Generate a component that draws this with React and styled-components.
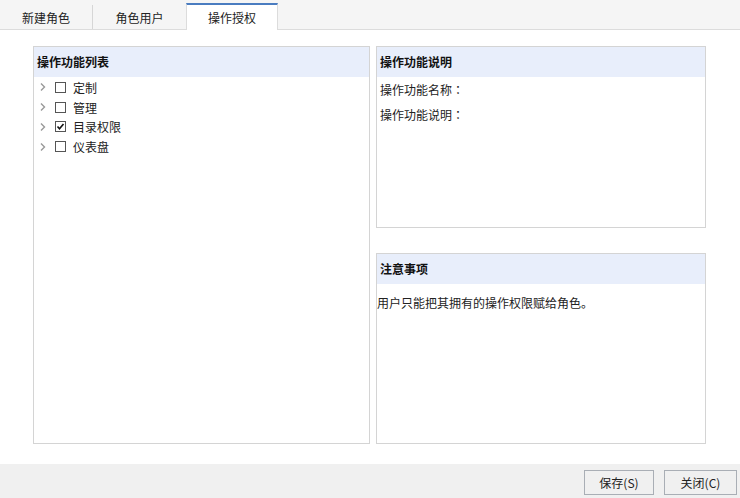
import React from "react";
import styled, { createGlobalStyle } from "styled-components";

const Global = createGlobalStyle`
  html, body { margin: 0; padding: 0; background: #fff; }
  body {
    font-family: "Noto Sans CJK SC", "Microsoft YaHei", "Noto Sans", sans-serif;
    font-size: 12px;
    color: #222;
  }
`;

const Page = styled.div`
  width: 740px;
  height: 498px;
  display: flex;
  flex-direction: column;
  overflow: hidden;
`;

const TabBar = styled.div`
  height: 29px;
  background: #f5f5f5;
  border-bottom: 1px solid #dcdcdc;
  display: flex;
  align-items: flex-end;
`;

const Tab = styled.div`
  width: ${(p) => p.$w}px;
  height: ${(p) => (p.$active ? 27 : 24)}px;
  box-sizing: border-box;
  display: flex;
  align-items: center;
  justify-content: center;
  font-size: 12px;
  color: #222;
  margin-bottom: ${(p) => (p.$active ? -1 : 0)}px;
  background: ${(p) => (p.$active ? "#fff" : "transparent")};
  border-top: ${(p) => (p.$active ? "2px solid #4a7cc0" : "none")};
  border-left: ${(p) => (p.$active ? "1px solid #dcdcdc" : "none")};
  border-right: ${(p) => (p.$active ? "1px solid #dcdcdc" : p.$sep ? "1px solid #d6d6d6" : "none")};
  padding-top: ${(p) => (p.$active ? 0 : 2)}px;
`;

const Body = styled.div`
  display: flex;
  gap: 6px;
  padding: 16px 0 0 33px;
  height: 418px;
  box-sizing: border-box;
`;

const Panel = styled.div`
  width: ${(p) => p.$w}px;
  height: ${(p) => p.$h}px;
  box-sizing: border-box;
  border: 1px solid #d4d4d4;
  background: #fff;
`;

const Column = styled.div`
  display: flex;
  flex-direction: column;
  gap: 25px;
`;

const PanelHeader = styled.div`
  height: 30px;
  background: #e8eefb;
  display: flex;
  align-items: center;
  padding-left: 3px;
  font-weight: bold;
  font-size: 12px;
  color: #111;
`;

const Tree = styled.div`
  padding-top: 1px;
  display: flex;
  flex-direction: column;
`;

const TreeRow = styled.div`
  height: 19.7px;
  display: flex;
  align-items: center;
  padding-left: 5px;
`;

const Arrow = styled.svg`
  width: 8px;
  height: 10px;
  margin-right: 8px;
`;

const Box = styled.div`
  width: 11px;
  height: 11px;
  box-sizing: border-box;
  border: 1px solid #555;
  background: #fff;
  margin-right: 7px;
  display: flex;
  align-items: center;
  justify-content: center;
`;

const Label = styled.span`
  font-size: 12px;
  color: #222;
`;

const InfoLine = styled.div`
  height: 25px;
  display: flex;
  align-items: center;
  padding-left: 3px;
  color: #222;
`;

const Colon = styled.span`
  font-family: "Noto Sans CJK TC", "Noto Sans CJK SC", sans-serif;
`;

const NoteText = styled.div`
  padding-top: 10px;
  color: #222;
`;

const Spacer = styled.div`
  height: 21px;
`;

const Footer = styled.div`
  height: 34px;
  background: #f0f0f0;
  display: flex;
  justify-content: flex-end;
  align-items: flex-start;
  padding: 6px 3px 0 0;
  gap: 10px;
  box-sizing: border-box;
`;

const Button = styled.button`
  width: ${(p) => p.$w}px;
  height: 25px;
  box-sizing: border-box;
  border: 1px solid #a9aeb5;
  background: #f0f0f0;
  font-family: inherit;
  font-size: 12px;
  color: #222;
  padding: 0;
`;

const items = [
  { label: "定制", checked: false },
  { label: "管理", checked: false },
  { label: "目录权限", checked: true },
  { label: "仪表盘", checked: false },
];

export default function App() {
  return (
    <Page>
      <Global />
      <TabBar>
        <Tab $w={93} $sep>新建角色</Tab>
        <Tab $w={93}>角色用户</Tab>
        <Tab $w={92} $active>操作授权</Tab>
      </TabBar>
      <Body>
        <Panel $w={337} $h={398}>
          <PanelHeader>操作功能列表</PanelHeader>
          <Tree>
            {items.map((it) => (
              <TreeRow key={it.label}>
                <Arrow viewBox="0 0 8 10">
                  <path d="M2 1.5 L5.5 5 L2 8.5" fill="none" stroke="#999" strokeWidth="1.4" />
                </Arrow>
                <Box>
                  {it.checked && (
                    <svg width="9" height="9" viewBox="0 0 9 9">
                      <path d="M1.5 4.5 L3.5 6.8 L7.5 2" fill="none" stroke="#111" strokeWidth="1.6" />
                    </svg>
                  )}
                </Box>
                <Label>{it.label}</Label>
              </TreeRow>
            ))}
          </Tree>
        </Panel>
        <Column>
          <Panel $w={330} $h={182}>
            <PanelHeader>操作功能说明</PanelHeader>
            <InfoLine>操作功能名称<Colon>：</Colon></InfoLine>
            <InfoLine>操作功能说明<Colon>：</Colon></InfoLine>
          </Panel>
          <Panel $w={330} $h={191}>
            <PanelHeader>注意事项</PanelHeader>
            <NoteText>用户只能把其拥有的操作权限赋给角色。</NoteText>
          </Panel>
        </Column>
      </Body>
      <Spacer />
      <Footer>
        <Button $w={70}>保存(S)</Button>
        <Button $w={73}>关闭(C)</Button>
      </Footer>
    </Page>
  );
}
